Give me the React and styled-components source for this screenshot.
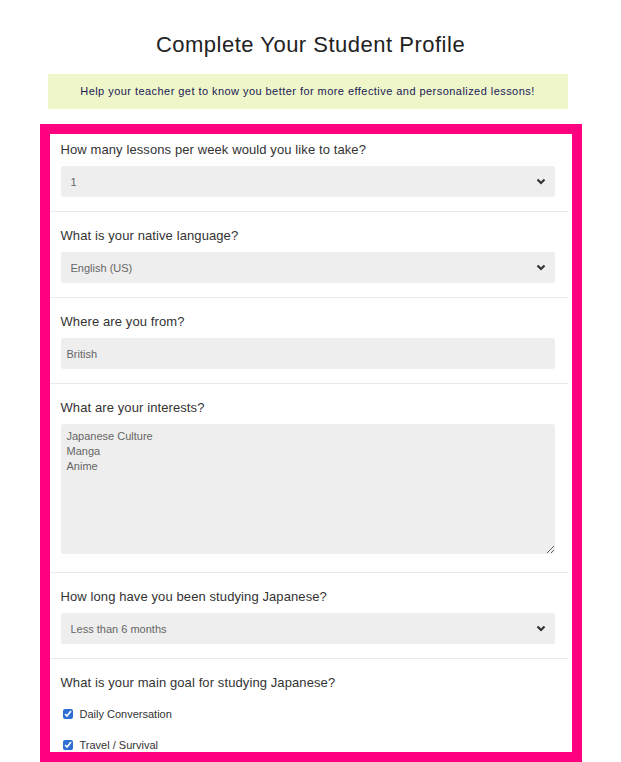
import React from 'react'
import styled, { createGlobalStyle } from 'styled-components'

const Global = createGlobalStyle`
  body {
    margin: 0;
    background: #ffffff;
    font-family: "Liberation Sans", Arial, sans-serif;
  }
`

const Page = styled.div`
  width: 542px;
  margin: 0 auto;
  padding-top: 30px;
`

const Title = styled.h1`
  margin: 0 0 14px;
  font-size: 22px;
  line-height: 30px;
  font-weight: 400;
  letter-spacing: 0.5px;
  color: #222;
  text-align: center;
`

const Banner = styled.div`
  margin: 0 14px 15px 8px;
  height: 35px;
  line-height: 35px;
  background: #eff6c9;
  color: #201a55;
  font-size: 11px;
  letter-spacing: 0.45px;
  text-align: center;
`

const Frame = styled.div`
  border: 10px solid #ff0080;
  height: 618px;
  overflow: hidden;
  background: #fff;
`

const Section = styled.div`
  margin-right: 4px;
  padding: 15px 13px 14px 11px;
  border-bottom: 1px solid #e9e9e9;
  &:first-child {
    padding-top: 7px;
  }
`

const Label = styled.label`
  display: block;
  font-size: 13px;
  line-height: 18px;
  letter-spacing: 0.1px;
  color: #333;
  margin-bottom: 7px;
`

const SelectWrap = styled.div`
  position: relative;
`

const Select = styled.select`
  display: block;
  width: 100%;
  height: 31px;
  appearance: none;
  border: none;
  border-radius: 3px;
  background: #eeeeee;
  color: #666;
  font-family: inherit;
  font-size: 11px;
  padding: 0 10px;
  outline: none;
`

const Chevron = styled.svg`
  position: absolute;
  right: 9px;
  top: 11px;
  pointer-events: none;
`

const Input = styled.input`
  display: block;
  box-sizing: border-box;
  width: 100%;
  height: 31px;
  border: none;
  border-radius: 3px;
  background: #eeeeee;
  color: #666;
  font-family: inherit;
  font-size: 11px;
  padding: 0 6px;
  outline: none;
`

const TextArea = styled.textarea`
  display: block;
  box-sizing: border-box;
  width: 100%;
  height: 130px;
  margin-bottom: 4px;
  border: none;
  border-radius: 3px;
  background: #eeeeee;
  color: #666;
  font-family: inherit;
  font-size: 11px;
  line-height: 15px;
  padding: 5px 6px;
  resize: vertical;
  outline: none;
`

const Checks = styled.div`
  display: flex;
  flex-direction: column;
  gap: 11px;
  padding-top: 5px;
`

const CheckRow = styled.label`
  display: flex;
  align-items: center;
  gap: 7px;
  height: 20px;
  padding-left: 2px;
  font-size: 11px;
  color: #333;
`

const Box = styled.input`
  width: 10px;
  height: 10px;
  margin: 0;
  accent-color: #2f6fd4;
`

const ChevronIcon = () => (
  <Chevron width="10" height="9" viewBox="0 0 10 9">
    <path d="M1.5 2.5 L5 6 L8.5 2.5" fill="none" stroke="#333" strokeWidth="2.2" />
  </Chevron>
)

const DropDown = ({ value, options }) => (
  <SelectWrap>
    <Select defaultValue={value}>
      {options.map((o) => (
        <option key={o}>{o}</option>
      ))}
    </Select>
    <ChevronIcon />
  </SelectWrap>
)

const App = () => {
  return (
    <Page>
      <Global />
      <Title>Complete Your Student Profile</Title>
      <Banner>Help your teacher get to know you better for more effective and personalized lessons!</Banner>
      <Frame>
        <Section>
          <Label>How many lessons per week would you like to take?</Label>
          <DropDown value="1" options={['1', '2', '3', '4', '5']} />
        </Section>
        <Section>
          <Label>What is your native language?</Label>
          <DropDown value="English (US)" options={['English (US)', 'English (UK)', 'Other']} />
        </Section>
        <Section>
          <Label>Where are you from?</Label>
          <Input defaultValue="British" />
        </Section>
        <Section>
          <Label>What are your interests?</Label>
          <TextArea defaultValue={'Japanese Culture\nManga\nAnime'} />
        </Section>
        <Section>
          <Label>How long have you been studying Japanese?</Label>
          <DropDown value="Less than 6 months" options={['Less than 6 months', '6 months - 1 year', 'More than 1 year']} />
        </Section>
        <Section>
          <Label>What is your main goal for studying Japanese?</Label>
          <Checks>
            <CheckRow><Box type="checkbox" defaultChecked />Daily Conversation</CheckRow>
            <CheckRow><Box type="checkbox" defaultChecked />Travel / Survival</CheckRow>
          </Checks>
        </Section>
      </Frame>
    </Page>
  )
}

export default App
